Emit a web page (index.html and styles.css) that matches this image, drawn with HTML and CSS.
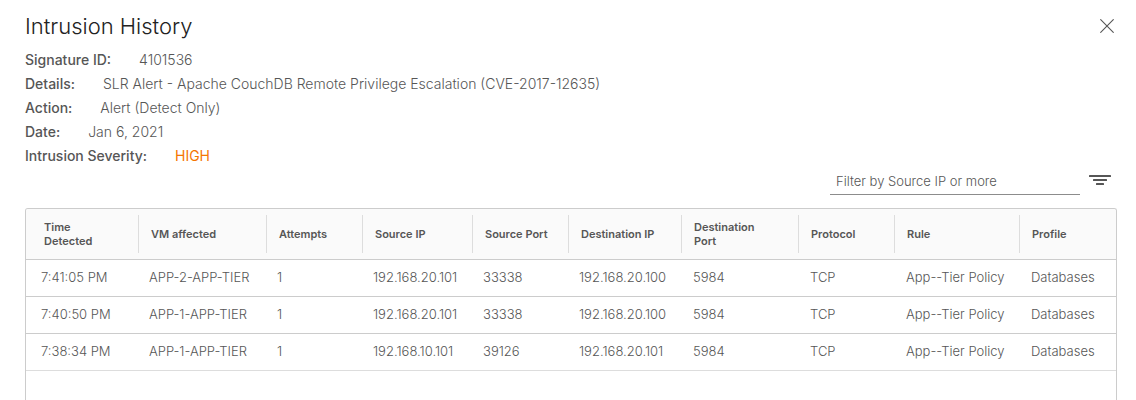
FILE: index.html
```html
<!DOCTYPE html>
<html lang="en">
<head>
<meta charset="utf-8">
<meta name="viewport" content="width=device-width, initial-scale=1">
<title>Intrusion History</title>
<link rel="stylesheet" href="styles.css">
</head>
<body>
<main class="panel">
  <header class="panel-header">
    <h1 class="title">Intrusion History</h1>
    <button class="icon-button" type="button" aria-label="Close">
      <svg width="14" height="14" viewBox="0 0 14 14" fill="none" stroke="#565656" stroke-width="1.1" stroke-linecap="round"><path d="M0.7 0.7l12.6 12.6M13.3 0.7L0.7 13.3"/></svg>
    </button>
  </header>
  <dl class="summary">
    <div class="summary-row"><dt>Signature ID:</dt><dd>4101536</dd></div>
    <div class="summary-row"><dt>Details:</dt><dd>SLR Alert - Apache CouchDB Remote Privilege Escalation (CVE-2017-12635)</dd></div>
    <div class="summary-row"><dt>Action:</dt><dd>Alert (Detect Only)</dd></div>
    <div class="summary-row"><dt>Date:</dt><dd>Jan 6, 2021</dd></div>
    <div class="summary-row"><dt>Intrusion Severity:</dt><dd class="severity-high">HIGH</dd></div>
  </dl>
  <div class="toolbar">
    <input class="filter" type="text" aria-label="Filter" placeholder="Filter by Source IP or more">
    <button class="icon-button" type="button" aria-label="Filter options">
      <svg width="22" height="16" viewBox="0 0 22 16" fill="#565656"><rect x="0" y="1" width="22" height="2" rx="0.5"/><rect x="4" y="5" width="14" height="2" rx="0.5"/><rect x="7" y="9" width="8" height="2" rx="0.5"/></svg>
    </button>
  </div>
  <div class="grid">
    <table class="events">
      <colgroup>
        <col class="col-time"><col class="col-vm"><col class="col-small"><col class="col-source"><col class="col-small"><col class="col-destination"><col class="col-port"><col class="col-small"><col class="col-rule"><col class="col-profile">
      </colgroup>
      <thead>
        <tr><th scope="col"><span>Time<br>Detected</span></th><th scope="col"><span>VM affected</span></th><th scope="col"><span>Attempts</span></th><th scope="col"><span>Source IP</span></th><th scope="col"><span>Source Port</span></th><th scope="col"><span>Destination IP</span></th><th scope="col"><span>Destination<br>Port</span></th><th scope="col"><span>Protocol</span></th><th scope="col"><span>Rule</span></th><th scope="col"><span>Profile</span></th></tr>
      </thead>
      <tbody>
        <tr><td>7:41:05 PM</td><td>APP-2-APP-TIER</td><td>1</td><td>192.168.20.101</td><td>33338</td><td>192.168.20.100</td><td>5984</td><td>TCP</td><td>App--Tier Policy</td><td>Databases</td></tr>
        <tr><td>7:40:50 PM</td><td>APP-1-APP-TIER</td><td>1</td><td>192.168.20.101</td><td>33338</td><td>192.168.20.100</td><td>5984</td><td>TCP</td><td>App--Tier Policy</td><td>Databases</td></tr>
        <tr><td>7:38:34 PM</td><td>APP-1-APP-TIER</td><td>1</td><td>192.168.10.101</td><td>39126</td><td>192.168.20.101</td><td>5984</td><td>TCP</td><td>App--Tier Policy</td><td>Databases</td></tr>
      </tbody>
    </table>
  </div>
</main>
</body>
</html>
```
FILE: styles.css
```css
* { box-sizing: border-box; }

body {
  margin: 0;
  background: #fff;
  color: #565656;
  font-family: Inter, "Open Sans", sans-serif;
  font-size: 14px;
}

.panel {
  display: flex;
  flex-direction: column;
  min-height: 100vh;
  padding: 10px 19px 0 25px;
}

.panel-header {
  display: flex;
  align-items: center;
  justify-content: space-between;
}

.title {
  margin: 0;
  color: #222;
  font-size: 22px;
  font-weight: 300;
  line-height: 32px;
}

.icon-button {
  display: flex;
  padding: 3px;
  border: 0;
  background: none;
  cursor: pointer;
}

.summary {
  margin: 6px 0 0;
  line-height: 24px;
}

.summary-row {
  display: flex;
  gap: 28px;
}

.summary dt { font-weight: 500; }

.summary dd {
  margin: 0;
  font-weight: 300;
}

.summary .severity-high {
  color: #f57600;
  font-weight: 400;
}

.toolbar {
  display: flex;
  justify-content: flex-end;
  align-items: center;
  gap: 6px;
  padding-right: 3px;
}

.filter {
  width: 250px;
  height: 27px;
  padding: 0 6px;
  border: 0;
  border-bottom: 1px solid #8c8c8c;
  background: transparent;
  color: #565656;
  font: 300 13px Inter, "Open Sans", sans-serif;
}

.filter::placeholder {
  color: #565656;
  opacity: 1;
}

.grid {
  flex: 1;
  margin-top: 13px;
  border: 1px solid #ccc;
  border-bottom: 0;
  border-radius: 3px 3px 0 0;
  overflow: hidden;
}

.events {
  width: 100%;
  table-layout: fixed;
  border-spacing: 0;
}

.col-time { width: 112px; }
.col-vm { width: 128px; }
.col-small { width: 96px; }
.col-source { width: 110px; }
.col-destination { width: 113px; }
.col-port { width: 117px; }
.col-rule { width: 125px; }
.col-profile { width: 97px; }

.events th {
  height: 51px;
  padding: 6px 0;
  border-bottom: 1px solid #ccc;
  background: #fafafa;
  font-size: 11px;
  font-weight: 600;
  line-height: 14px;
  text-align: left;
}

.events th span {
  display: flex;
  flex-direction: column;
  justify-content: center;
  height: 38px;
  padding: 0 12px;
  border-left: 1px solid #ddd;
}

.events th:first-child span {
  padding-left: 18px;
  border-left: 0;
}

.events td {
  height: 37px;
  padding: 0 0 2px 11px;
  border-bottom: 1px solid #ccc;
  font-size: 13px;
  font-weight: 300;
  line-height: 18px;
  white-space: nowrap;
}

.events td:first-child { padding-left: 15px; }

.events td:nth-child(n + 7) { padding-left: 12px; }

.events tr:last-child td { border-bottom-color: #ddd; }
```
